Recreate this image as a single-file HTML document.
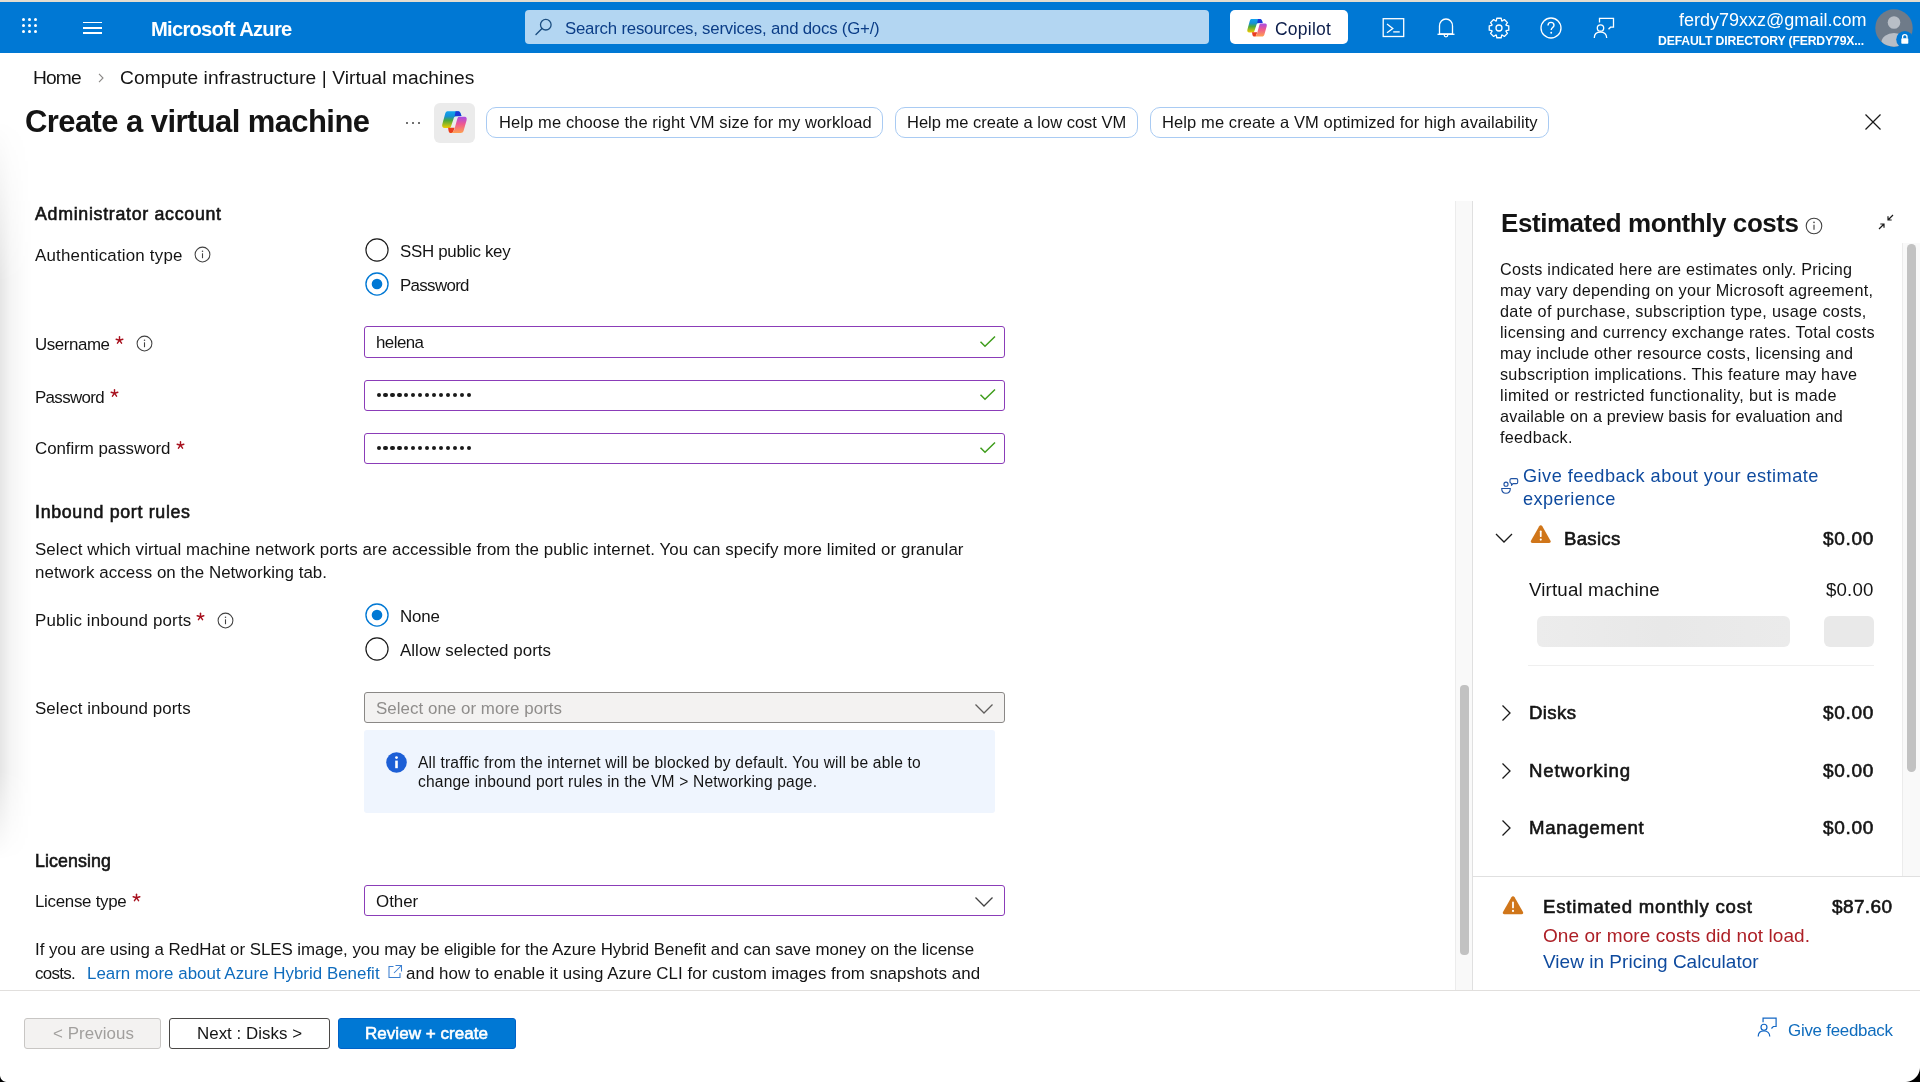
<!DOCTYPE html>
<html><head><meta charset="utf-8"><title>Create a virtual machine - Microsoft Azure</title>
<style>
html,body{margin:0;padding:0;background:#fff;width:1920px;height:1082px;overflow:hidden;position:relative;font-family:"Liberation Sans",sans-serif}
.t{position:absolute;white-space:pre;will-change:transform}
</style></head><body>
<div style="position:absolute;left:0px;top:0px;width:1920px;height:2px;background:#e4ddd0"></div>
<div style="position:absolute;left:0px;top:2px;width:1920px;height:51px;background:#0078d4"></div>
<div style="position:absolute;left:21.7px;top:17.5px;width:3px;height:3px;border-radius:50%;background:#fff"></div>
<div style="position:absolute;left:27.9px;top:17.5px;width:3px;height:3px;border-radius:50%;background:#fff"></div>
<div style="position:absolute;left:34.2px;top:17.5px;width:3px;height:3px;border-radius:50%;background:#fff"></div>
<div style="position:absolute;left:21.7px;top:23.75px;width:3px;height:3px;border-radius:50%;background:#fff"></div>
<div style="position:absolute;left:27.9px;top:23.75px;width:3px;height:3px;border-radius:50%;background:#fff"></div>
<div style="position:absolute;left:34.2px;top:23.75px;width:3px;height:3px;border-radius:50%;background:#fff"></div>
<div style="position:absolute;left:21.7px;top:30.0px;width:3px;height:3px;border-radius:50%;background:#fff"></div>
<div style="position:absolute;left:27.9px;top:30.0px;width:3px;height:3px;border-radius:50%;background:#fff"></div>
<div style="position:absolute;left:34.2px;top:30.0px;width:3px;height:3px;border-radius:50%;background:#fff"></div>
<div style="position:absolute;left:83px;top:21.55px;width:18.700000000000003px;height:1.5px;background:#fff"></div>
<div style="position:absolute;left:83px;top:27.0px;width:18.700000000000003px;height:1.5px;background:#fff"></div>
<div style="position:absolute;left:83px;top:32.15px;width:18.700000000000003px;height:1.5px;background:#fff"></div>
<div style="position:absolute;left:525px;top:10px;width:684px;height:34px;background:#b3d6f2;border-radius:4px"></div>
<svg style="position:absolute;left:530px;top:16px" width="24" height="24" viewBox="0 0 24 24"><circle cx="15.8" cy="8.7" r="5.3" fill="none" stroke="#1b4e80" stroke-width="1.3"/><line x1="12" y1="12.6" x2="6" y2="18.6" stroke="#1b4e80" stroke-width="1.4" stroke-linecap="round"/></svg>
<div style="position:absolute;left:1230px;top:10px;width:118px;height:34px;background:#fff;border-radius:5px"></div>
<svg style="position:absolute;left:1243.5px;top:14.7px" width="27" height="27" viewBox="0 0 1082 1082"><defs>
<linearGradient id="cg1a" x1="0" y1="0" x2="0" y2="1"><stop offset="0" stop-color="#12a4f0"/><stop offset="0.3" stop-color="#1590d8"/><stop offset="0.55" stop-color="#4aa83c"/><stop offset="1" stop-color="#f2cc00"/></linearGradient>
<linearGradient id="cg2a" x1="0" y1="0" x2="0" y2="1"><stop offset="0" stop-color="#a64ce6"/><stop offset="0.45" stop-color="#ee5990"/><stop offset="1" stop-color="#ffa050"/></linearGradient></defs>
<path d="M300 165 L640 165 C700 165 730 210 745 320 L560 330 C520 340 500 380 490 420 L410 660 C400 690 380 700 340 700 L210 700 C150 700 120 650 135 590 L230 240 C250 190 270 165 300 165 Z" fill="url(#cg1a)"/>
<path d="M560 165 L640 165 C690 165 720 210 745 320 L530 325 C545 260 550 200 560 165 Z" fill="#1c36d6"/>
<path d="M320 690 L530 690 L480 830 C470 855 450 862 420 862 C380 862 350 840 340 800 Z" fill="#ea3d1c"/>
<path d="M660 340 L850 340 C905 340 925 390 910 450 L815 790 C800 840 770 860 720 860 L420 860 C470 850 500 810 520 750 L610 420 C625 370 640 340 660 340 Z" fill="url(#cg2a)"/>
</svg>
<svg style="position:absolute;left:1382px;top:17px" width="23" height="21" viewBox="0 0 23 21"><rect x="1.2" y="1.7" width="20.5" height="17.8" fill="none" stroke="#fff" stroke-width="1.3"/><polyline points="5,7 10.8,11.4 5,15.8" fill="none" stroke="#fff" stroke-width="1.3"/><line x1="11.2" y1="14.9" x2="17.7" y2="14.9" stroke="#fff" stroke-width="1.3"/></svg>
<svg style="position:absolute;left:1436px;top:17px" width="20" height="22" viewBox="0 0 20 22"><path d="M3.5 17 V9 C3.5 5 6.3 2 10 2 C13.7 2 16.5 5 16.5 9 V17 Z" fill="none" stroke="#fff" stroke-width="1.3"/><line x1="1.5" y1="17.3" x2="18.5" y2="17.3" stroke="#fff" stroke-width="1.3"/><path d="M8.2 18 a1.8 1.8 0 0 0 3.6 0" fill="none" stroke="#fff" stroke-width="1.2"/></svg>
<svg style="position:absolute;left:1487.5px;top:16.5px" width="22" height="22" viewBox="0 0 22 22"><polygon points="20.76,8.82 20.76,13.18 18.11,13.68 17.92,14.14 19.44,16.36 16.36,19.44 14.14,17.92 13.68,18.11 13.18,20.76 8.82,20.76 8.32,18.11 7.86,17.92 5.64,19.44 2.56,16.36 4.08,14.14 3.89,13.68 1.24,13.18 1.24,8.82 3.89,8.32 4.08,7.86 2.56,5.64 5.64,2.56 7.86,4.08 8.32,3.89 8.82,1.24 13.18,1.24 13.68,3.89 14.14,4.08 16.36,2.56 19.44,5.64 17.92,7.86 18.11,8.32" fill="none" stroke="#fff" stroke-width="1.3" stroke-linejoin="round"/><circle cx="11" cy="11" r="3" fill="none" stroke="#fff" stroke-width="1.3"/></svg>
<svg style="position:absolute;left:1540px;top:17px" width="22" height="22" viewBox="0 0 22 22"><circle cx="11" cy="11" r="10" fill="none" stroke="#fff" stroke-width="1.3"/><path d="M8 8.5 C8 6.5 9.4 5.4 11 5.4 C12.7 5.4 14 6.6 14 8.2 C14 10.4 11.2 10.6 11.2 13" fill="none" stroke="#fff" stroke-width="1.4"/><circle cx="11.2" cy="15.8" r="0.95" fill="#fff"/></svg>
<svg style="position:absolute;left:1593px;top:17px" width="22" height="22" viewBox="0 0 22 22"><path d="M6.5 5.5 V1.3 H20.5 V10.2 H17.5 L15.5 12.3" fill="none" stroke="#fff" stroke-width="1.3"/><circle cx="7.5" cy="11" r="3.2" fill="none" stroke="#fff" stroke-width="1.3"/><path d="M1.3 21 C1.3 17 4 15 7.5 15 C11 15 13.7 17 13.7 21" fill="none" stroke="#fff" stroke-width="1.3"/></svg>
<svg style="position:absolute;left:1874.5px;top:8.5px" width="46" height="40" viewBox="0 0 46 40"><defs><clipPath id="av"><circle cx="19" cy="19" r="18.7"/></clipPath></defs><circle cx="19" cy="19" r="18.7" fill="#6f7b89"/><g clip-path="url(#av)"><circle cx="19" cy="13.5" r="6.3" fill="#b8bec6"/><ellipse cx="19" cy="33" rx="12.5" ry="9" fill="#b8bec6"/></g><circle cx="29.8" cy="30.5" r="8.6" fill="#0078d4"/><rect x="26.3" y="29.2" width="7" height="5.6" rx="0.8" fill="#fff"/><path d="M27.6 29.5 V27.8 a2.2 2.2 0 0 1 4.4 0 V29.5" fill="none" stroke="#fff" stroke-width="1.3"/></svg>
<div style="position:absolute;left:0;top:120px;width:32px;height:740px;background:linear-gradient(to right,rgba(0,0,0,0.1),rgba(0,0,0,0.04) 35%,rgba(0,0,0,0.01) 75%,rgba(0,0,0,0) 100%);-webkit-mask-image:linear-gradient(to bottom,transparent 0,#000 22%,#000 88%,transparent 100%)"></div>
<svg style="position:absolute;left:96px;top:72px" width="10" height="12" viewBox="0 0 10 12"><polyline points="3,1.8 7,6 3,10.2" fill="none" stroke="#8a8886" stroke-width="1.1"/></svg>
<div style="position:absolute;left:405.5px;top:121.5px;width:2px;height:2px;border-radius:50%;background:#424242"></div>
<div style="position:absolute;left:411.5px;top:121.5px;width:2px;height:2px;border-radius:50%;background:#424242"></div>
<div style="position:absolute;left:417.5px;top:121.5px;width:2px;height:2px;border-radius:50%;background:#424242"></div>
<div style="position:absolute;left:434px;top:103px;width:41px;height:40px;background:#ebebeb;border-radius:6px"></div>
<svg style="position:absolute;left:438px;top:106px" width="34" height="34" viewBox="0 0 1082 1082"><defs>
<linearGradient id="cg1b" x1="0" y1="0" x2="0" y2="1"><stop offset="0" stop-color="#12a4f0"/><stop offset="0.3" stop-color="#1590d8"/><stop offset="0.55" stop-color="#4aa83c"/><stop offset="1" stop-color="#f2cc00"/></linearGradient>
<linearGradient id="cg2b" x1="0" y1="0" x2="0" y2="1"><stop offset="0" stop-color="#a64ce6"/><stop offset="0.45" stop-color="#ee5990"/><stop offset="1" stop-color="#ffa050"/></linearGradient></defs>
<path d="M300 165 L640 165 C700 165 730 210 745 320 L560 330 C520 340 500 380 490 420 L410 660 C400 690 380 700 340 700 L210 700 C150 700 120 650 135 590 L230 240 C250 190 270 165 300 165 Z" fill="url(#cg1b)"/>
<path d="M560 165 L640 165 C690 165 720 210 745 320 L530 325 C545 260 550 200 560 165 Z" fill="#1c36d6"/>
<path d="M320 690 L530 690 L480 830 C470 855 450 862 420 862 C380 862 350 840 340 800 Z" fill="#ea3d1c"/>
<path d="M660 340 L850 340 C905 340 925 390 910 450 L815 790 C800 840 770 860 720 860 L420 860 C470 850 500 810 520 750 L610 420 C625 370 640 340 660 340 Z" fill="url(#cg2b)"/>
</svg>
<div style="position:absolute;left:486.3px;top:107.3px;width:396.7px;height:30.500000000000014px;box-sizing:border-box;border:1.3px solid #a9cbf3;border-radius:10px;background:#fff"></div>
<div style="position:absolute;left:894.5px;top:107.3px;width:243.9000000000001px;height:30.500000000000014px;box-sizing:border-box;border:1.3px solid #a9cbf3;border-radius:10px;background:#fff"></div>
<div style="position:absolute;left:1150px;top:107.3px;width:399px;height:30.500000000000014px;box-sizing:border-box;border:1.3px solid #a9cbf3;border-radius:10px;background:#fff"></div>
<svg style="position:absolute;left:1863px;top:112px" width="20" height="20" viewBox="0 0 20 20"><line x1="2.5" y1="2.5" x2="17.5" y2="17.5" stroke="#1a1a1a" stroke-width="1.3"/><line x1="17.5" y1="2.5" x2="2.5" y2="17.5" stroke="#1a1a1a" stroke-width="1.3"/></svg>
<svg style="position:absolute;left:194.1px;top:246.4px" width="17" height="17" viewBox="0 0 17 17"><circle cx="8.5" cy="8.5" r="7.4" fill="none" stroke="#424242" stroke-width="1.05"/><line x1="8.5" y1="7.3" x2="8.5" y2="12.2" stroke="#424242" stroke-width="1.1"/><circle cx="8.5" cy="5.2" r="0.75" fill="#424242"/></svg>
<svg style="position:absolute;left:363.7px;top:237px" width="26" height="26" viewBox="0 0 26 26"><circle cx="13" cy="13" r="11.05" fill="none" stroke="#1a1a1a" stroke-width="1.2"/></svg>
<svg style="position:absolute;left:363.7px;top:271.3px" width="26" height="26" viewBox="0 0 26 26"><circle cx="13" cy="13" r="11.05" fill="none" stroke="#0078d4" stroke-width="1.35"/><circle cx="13" cy="13" r="5.3" fill="#0078d4"/></svg>
<svg style="position:absolute;left:0;top:0;overflow:visible" width="1" height="1"><line x1="119.50" y1="340.30" x2="119.50" y2="336.80" stroke="#a8121f" stroke-width="1.45" stroke-linecap="round"/><line x1="119.50" y1="340.30" x2="122.83" y2="339.22" stroke="#a8121f" stroke-width="1.45" stroke-linecap="round"/><line x1="119.50" y1="340.30" x2="121.56" y2="343.13" stroke="#a8121f" stroke-width="1.45" stroke-linecap="round"/><line x1="119.50" y1="340.30" x2="117.44" y2="343.13" stroke="#a8121f" stroke-width="1.45" stroke-linecap="round"/><line x1="119.50" y1="340.30" x2="116.17" y2="339.22" stroke="#a8121f" stroke-width="1.45" stroke-linecap="round"/></svg>
<svg style="position:absolute;left:136.2px;top:334.6px" width="17" height="17" viewBox="0 0 17 17"><circle cx="8.5" cy="8.5" r="7.4" fill="none" stroke="#424242" stroke-width="1.05"/><line x1="8.5" y1="7.3" x2="8.5" y2="12.2" stroke="#424242" stroke-width="1.1"/><circle cx="8.5" cy="5.2" r="0.75" fill="#424242"/></svg>
<svg style="position:absolute;left:0;top:0;overflow:visible" width="1" height="1"><line x1="114.50" y1="393.30" x2="114.50" y2="389.80" stroke="#a8121f" stroke-width="1.45" stroke-linecap="round"/><line x1="114.50" y1="393.30" x2="117.83" y2="392.22" stroke="#a8121f" stroke-width="1.45" stroke-linecap="round"/><line x1="114.50" y1="393.30" x2="116.56" y2="396.13" stroke="#a8121f" stroke-width="1.45" stroke-linecap="round"/><line x1="114.50" y1="393.30" x2="112.44" y2="396.13" stroke="#a8121f" stroke-width="1.45" stroke-linecap="round"/><line x1="114.50" y1="393.30" x2="111.17" y2="392.22" stroke="#a8121f" stroke-width="1.45" stroke-linecap="round"/></svg>
<svg style="position:absolute;left:0;top:0;overflow:visible" width="1" height="1"><line x1="180.50" y1="445.30" x2="180.50" y2="441.80" stroke="#a8121f" stroke-width="1.45" stroke-linecap="round"/><line x1="180.50" y1="445.30" x2="183.83" y2="444.22" stroke="#a8121f" stroke-width="1.45" stroke-linecap="round"/><line x1="180.50" y1="445.30" x2="182.56" y2="448.13" stroke="#a8121f" stroke-width="1.45" stroke-linecap="round"/><line x1="180.50" y1="445.30" x2="178.44" y2="448.13" stroke="#a8121f" stroke-width="1.45" stroke-linecap="round"/><line x1="180.50" y1="445.30" x2="177.17" y2="444.22" stroke="#a8121f" stroke-width="1.45" stroke-linecap="round"/></svg>
<div style="position:absolute;left:363.5px;top:326.3px;width:641.0px;height:31.5px;box-sizing:border-box;border:1.3px solid #8b3db8;border-radius:3px;background:#fff"></div>
<svg style="position:absolute;left:979px;top:334.55px" width="18" height="14" viewBox="0 0 18 14"><polyline points="1.5,6.8 6,11.3 16,1.5" fill="none" stroke="#3f9d1c" stroke-width="1.5"/></svg>
<div style="position:absolute;left:363.5px;top:379.8px;width:641.0px;height:31.0px;box-sizing:border-box;border:1.3px solid #8b3db8;border-radius:3px;background:#fff"></div>
<svg style="position:absolute;left:979px;top:387.8px" width="18" height="14" viewBox="0 0 18 14"><polyline points="1.5,6.8 6,11.3 16,1.5" fill="none" stroke="#3f9d1c" stroke-width="1.5"/></svg>
<div style="position:absolute;left:363.5px;top:432.6px;width:641.0px;height:31.0px;box-sizing:border-box;border:1.3px solid #8b3db8;border-radius:3px;background:#fff"></div>
<svg style="position:absolute;left:979px;top:440.6px" width="18" height="14" viewBox="0 0 18 14"><polyline points="1.5,6.8 6,11.3 16,1.5" fill="none" stroke="#3f9d1c" stroke-width="1.5"/></svg>
<div style="position:absolute;left:376.50px;top:393.30px;width:4.2px;height:4.2px;border-radius:50%;background:#1a1a1a"></div>
<div style="position:absolute;left:383.45px;top:393.30px;width:4.2px;height:4.2px;border-radius:50%;background:#1a1a1a"></div>
<div style="position:absolute;left:390.40px;top:393.30px;width:4.2px;height:4.2px;border-radius:50%;background:#1a1a1a"></div>
<div style="position:absolute;left:397.35px;top:393.30px;width:4.2px;height:4.2px;border-radius:50%;background:#1a1a1a"></div>
<div style="position:absolute;left:404.30px;top:393.30px;width:4.2px;height:4.2px;border-radius:50%;background:#1a1a1a"></div>
<div style="position:absolute;left:411.25px;top:393.30px;width:4.2px;height:4.2px;border-radius:50%;background:#1a1a1a"></div>
<div style="position:absolute;left:418.20px;top:393.30px;width:4.2px;height:4.2px;border-radius:50%;background:#1a1a1a"></div>
<div style="position:absolute;left:425.15px;top:393.30px;width:4.2px;height:4.2px;border-radius:50%;background:#1a1a1a"></div>
<div style="position:absolute;left:432.10px;top:393.30px;width:4.2px;height:4.2px;border-radius:50%;background:#1a1a1a"></div>
<div style="position:absolute;left:439.05px;top:393.30px;width:4.2px;height:4.2px;border-radius:50%;background:#1a1a1a"></div>
<div style="position:absolute;left:446.00px;top:393.30px;width:4.2px;height:4.2px;border-radius:50%;background:#1a1a1a"></div>
<div style="position:absolute;left:452.95px;top:393.30px;width:4.2px;height:4.2px;border-radius:50%;background:#1a1a1a"></div>
<div style="position:absolute;left:459.90px;top:393.30px;width:4.2px;height:4.2px;border-radius:50%;background:#1a1a1a"></div>
<div style="position:absolute;left:466.85px;top:393.30px;width:4.2px;height:4.2px;border-radius:50%;background:#1a1a1a"></div>
<div style="position:absolute;left:376.50px;top:445.90px;width:4.2px;height:4.2px;border-radius:50%;background:#1a1a1a"></div>
<div style="position:absolute;left:383.45px;top:445.90px;width:4.2px;height:4.2px;border-radius:50%;background:#1a1a1a"></div>
<div style="position:absolute;left:390.40px;top:445.90px;width:4.2px;height:4.2px;border-radius:50%;background:#1a1a1a"></div>
<div style="position:absolute;left:397.35px;top:445.90px;width:4.2px;height:4.2px;border-radius:50%;background:#1a1a1a"></div>
<div style="position:absolute;left:404.30px;top:445.90px;width:4.2px;height:4.2px;border-radius:50%;background:#1a1a1a"></div>
<div style="position:absolute;left:411.25px;top:445.90px;width:4.2px;height:4.2px;border-radius:50%;background:#1a1a1a"></div>
<div style="position:absolute;left:418.20px;top:445.90px;width:4.2px;height:4.2px;border-radius:50%;background:#1a1a1a"></div>
<div style="position:absolute;left:425.15px;top:445.90px;width:4.2px;height:4.2px;border-radius:50%;background:#1a1a1a"></div>
<div style="position:absolute;left:432.10px;top:445.90px;width:4.2px;height:4.2px;border-radius:50%;background:#1a1a1a"></div>
<div style="position:absolute;left:439.05px;top:445.90px;width:4.2px;height:4.2px;border-radius:50%;background:#1a1a1a"></div>
<div style="position:absolute;left:446.00px;top:445.90px;width:4.2px;height:4.2px;border-radius:50%;background:#1a1a1a"></div>
<div style="position:absolute;left:452.95px;top:445.90px;width:4.2px;height:4.2px;border-radius:50%;background:#1a1a1a"></div>
<div style="position:absolute;left:459.90px;top:445.90px;width:4.2px;height:4.2px;border-radius:50%;background:#1a1a1a"></div>
<div style="position:absolute;left:466.85px;top:445.90px;width:4.2px;height:4.2px;border-radius:50%;background:#1a1a1a"></div>
<svg style="position:absolute;left:0;top:0;overflow:visible" width="1" height="1"><line x1="200.50" y1="616.80" x2="200.50" y2="613.30" stroke="#a8121f" stroke-width="1.45" stroke-linecap="round"/><line x1="200.50" y1="616.80" x2="203.83" y2="615.72" stroke="#a8121f" stroke-width="1.45" stroke-linecap="round"/><line x1="200.50" y1="616.80" x2="202.56" y2="619.63" stroke="#a8121f" stroke-width="1.45" stroke-linecap="round"/><line x1="200.50" y1="616.80" x2="198.44" y2="619.63" stroke="#a8121f" stroke-width="1.45" stroke-linecap="round"/><line x1="200.50" y1="616.80" x2="197.17" y2="615.72" stroke="#a8121f" stroke-width="1.45" stroke-linecap="round"/></svg>
<svg style="position:absolute;left:217.1px;top:611.5px" width="17" height="17" viewBox="0 0 17 17"><circle cx="8.5" cy="8.5" r="7.4" fill="none" stroke="#424242" stroke-width="1.05"/><line x1="8.5" y1="7.3" x2="8.5" y2="12.2" stroke="#424242" stroke-width="1.1"/><circle cx="8.5" cy="5.2" r="0.75" fill="#424242"/></svg>
<svg style="position:absolute;left:363.6px;top:601.5px" width="26" height="26" viewBox="0 0 26 26"><circle cx="13" cy="13" r="11.05" fill="none" stroke="#0078d4" stroke-width="1.35"/><circle cx="13" cy="13" r="5.3" fill="#0078d4"/></svg>
<svg style="position:absolute;left:363.6px;top:635.9px" width="26" height="26" viewBox="0 0 26 26"><circle cx="13" cy="13" r="11.05" fill="none" stroke="#1a1a1a" stroke-width="1.2"/></svg>
<div style="position:absolute;left:363.5px;top:691.5px;width:641.0px;height:31.0px;box-sizing:border-box;border:1.2px solid #8a8886;border-radius:3px;background:#f3f2f1"></div>
<svg style="position:absolute;left:974px;top:703px" width="20" height="12" viewBox="0 0 20 12"><polyline points="1.5,1.5 10,10 18.5,1.5" fill="none" stroke="#605e5c" stroke-width="1.3"/></svg>
<div style="position:absolute;left:364px;top:730px;width:631px;height:83px;background:#eff5fe;border-radius:3px"></div>
<svg style="position:absolute;left:385.5px;top:751.5px" width="21" height="21" viewBox="0 0 21 21"><circle cx="10.5" cy="10.5" r="10.3" fill="#1d5fd6"/><rect x="9.2" y="8.6" width="2.6" height="7.6" fill="#fff"/><circle cx="10.5" cy="5.6" r="1.45" fill="#fff"/></svg>
<svg style="position:absolute;left:0;top:0;overflow:visible" width="1" height="1"><line x1="136.50" y1="897.80" x2="136.50" y2="894.30" stroke="#a8121f" stroke-width="1.45" stroke-linecap="round"/><line x1="136.50" y1="897.80" x2="139.83" y2="896.72" stroke="#a8121f" stroke-width="1.45" stroke-linecap="round"/><line x1="136.50" y1="897.80" x2="138.56" y2="900.63" stroke="#a8121f" stroke-width="1.45" stroke-linecap="round"/><line x1="136.50" y1="897.80" x2="134.44" y2="900.63" stroke="#a8121f" stroke-width="1.45" stroke-linecap="round"/><line x1="136.50" y1="897.80" x2="133.17" y2="896.72" stroke="#a8121f" stroke-width="1.45" stroke-linecap="round"/></svg>
<div style="position:absolute;left:363.5px;top:884.8px;width:641.0px;height:30.800000000000068px;box-sizing:border-box;border:1.3px solid #8b3db8;border-radius:3px;background:#fff"></div>
<svg style="position:absolute;left:974px;top:896px" width="20" height="12" viewBox="0 0 20 12"><polyline points="1.5,1.5 10,10 18.5,1.5" fill="none" stroke="#424242" stroke-width="1.3"/></svg>
<svg style="position:absolute;left:386.5px;top:964px" width="16" height="16" viewBox="0 0 16 16"><path d="M6.5 2.5 H2 V13.5 H13 V9" fill="none" stroke="#3b7fd0" stroke-width="1.05"/><path d="M8.5 1.5 H14.5 V7.5 M14.5 1.5 L7 9" fill="none" stroke="#3b7fd0" stroke-width="1.05"/></svg>
<div style="position:absolute;left:0px;top:990px;width:1920px;height:92px;background:#fff"></div>
<div style="position:absolute;left:0px;top:989.5px;width:1920px;height:1.5px;background:#e1dfdd"></div>
<div style="position:absolute;left:24px;top:1018px;width:137.3px;height:30.59999999999991px;box-sizing:border-box;border:1.2px solid #c8c6c4;border-radius:3px;background:#f3f2f1"></div>
<div style="position:absolute;left:168.6px;top:1018px;width:161.9px;height:30.59999999999991px;box-sizing:border-box;border:1.2px solid #4a4846;border-radius:3px;background:#fff"></div>
<div style="position:absolute;left:337.9px;top:1017.8px;width:178.20000000000005px;height:30.799999999999955px;box-sizing:border-box;border:1px solid #0062c8;border-radius:3px;background:#0078d4"></div>
<svg style="position:absolute;left:1756.5px;top:1016.5px" width="20.5" height="20.5" viewBox="0 0 22 22"><path d="M6.5 5.5 V1.3 H20.5 V10.2 H17.5 L15.5 12.3" fill="none" stroke="#1266c4" stroke-width="1.3"/><circle cx="7.5" cy="11" r="3.2" fill="none" stroke="#1266c4" stroke-width="1.3"/><path d="M1.3 21 C1.3 17 4 15 7.5 15 C11 15 13.7 17 13.7 21" fill="none" stroke="#1266c4" stroke-width="1.3"/></svg>
<div style="position:absolute;left:1455px;top:201px;width:17.5px;height:789px;background:#f9f9f9;border-left:1px solid #ececec;box-sizing:border-box"></div>
<div style="position:absolute;left:1472px;top:201px;width:1.2000000000000455px;height:789px;background:#e0e0e0"></div>
<div style="position:absolute;left:1460px;top:684.5px;width:8.5px;height:270.5px;background:#c2c2c2;border-radius:4px"></div>
<svg style="position:absolute;left:1805px;top:216.5px" width="18" height="18" viewBox="0 0 18 18"><circle cx="9" cy="9" r="7.8" fill="none" stroke="#424242" stroke-width="1.1"/><line x1="9" y1="7.7" x2="9" y2="12.8" stroke="#424242" stroke-width="1.15"/><circle cx="9" cy="5.4" r="0.8" fill="#424242"/></svg>
<svg style="position:absolute;left:1876px;top:212px" width="20" height="20" viewBox="0 0 20 20"><path d="M17 3 L12 8 M12 4.3 V8 H15.7" fill="none" stroke="#1a1a1a" stroke-width="1.2"/><path d="M3 17 L8 12 M4.3 12 H8 V15.7" fill="none" stroke="#1a1a1a" stroke-width="1.2"/></svg>
<div style="position:absolute;left:1902px;top:243px;width:18px;height:633px;background:#f9f9f9;border-left:1px solid #ececec;box-sizing:border-box"></div>
<div style="position:absolute;left:1907px;top:244px;width:9px;height:527.5px;background:#c2c2c2;border-radius:4.5px"></div>
<svg style="position:absolute;left:1500px;top:476px" width="20" height="20" viewBox="0 0 20 20"><circle cx="6" cy="8.2" r="2.05" fill="none" stroke="#1f52a3" stroke-width="1.1"/><path d="M1.7 12.5 H10.3 C10.3 15.4 8.4 17.2 6 17.2 C3.6 17.2 1.7 15.4 1.7 12.5 Z" fill="none" stroke="#1f52a3" stroke-width="1.1"/><path d="M11.4 2.6 H16.3 C17.1 2.6 17.7 3.2 17.7 4 V6.2 C17.7 7 17.1 7.6 16.3 7.6 H13 L11.5 9.4 V7.5 C10.6 7.3 10 6.8 10 6 V4 C10 3.2 10.6 2.6 11.4 2.6 Z" fill="none" stroke="#1f52a3" stroke-width="1.1" stroke-linejoin="round"/></svg>
<svg style="position:absolute;left:1494px;top:531px" width="20" height="14" viewBox="0 0 20 14"><polyline points="2,3 10,11 18,3" fill="none" stroke="#1a1a1a" stroke-width="1.3"/></svg>
<svg style="position:absolute;left:1529.5px;top:524.3px" width="21.5" height="19.6" viewBox="0 0 22 20"><path d="M11 1.3 C11.7 1.3 12.2 1.7 12.6 2.3 L21 17 C21.6 18.1 21 19.3 19.6 19.3 H2.4 C1 19.3 0.4 18.1 1 17 L9.4 2.3 C9.8 1.7 10.3 1.3 11 1.3Z" fill="#d0761a"/><rect x="10.1" y="6.5" width="1.8" height="6.8" rx="0.9" fill="#fff"/><circle cx="11" cy="15.9" r="1.1" fill="#fff"/></svg>
<div style="position:absolute;left:1537px;top:616.3px;width:253px;height:30.40000000000009px;background:linear-gradient(to right,#ececec,#e8e8e8 50%,#ebebeb);border-radius:6px"></div>
<div style="position:absolute;left:1824.4px;top:616.3px;width:50.0px;height:30.40000000000009px;background:#e9e9e9;border-radius:6px"></div>
<div style="position:absolute;left:1528px;top:664.5px;width:346px;height:1.5px;background:#efefef"></div>
<svg style="position:absolute;left:1498.5px;top:702.75px" width="14" height="20" viewBox="0 0 14 20"><polyline points="3.5,2.5 11,10 3.5,17.5" fill="none" stroke="#1a1a1a" stroke-width="1.3"/></svg>
<svg style="position:absolute;left:1498.5px;top:761px" width="14" height="20" viewBox="0 0 14 20"><polyline points="3.5,2.5 11,10 3.5,17.5" fill="none" stroke="#1a1a1a" stroke-width="1.3"/></svg>
<svg style="position:absolute;left:1498.5px;top:818.2px" width="14" height="20" viewBox="0 0 14 20"><polyline points="3.5,2.5 11,10 3.5,17.5" fill="none" stroke="#1a1a1a" stroke-width="1.3"/></svg>
<div style="position:absolute;left:1472px;top:875.5px;width:448px;height:1.2999999999999545px;background:#e0e0e0"></div>
<svg style="position:absolute;left:1502px;top:895px" width="22" height="20" viewBox="0 0 22 20"><path d="M11 1.3 C11.7 1.3 12.2 1.7 12.6 2.3 L21 17 C21.6 18.1 21 19.3 19.6 19.3 H2.4 C1 19.3 0.4 18.1 1 17 L9.4 2.3 C9.8 1.7 10.3 1.3 11 1.3Z" fill="#d0761a"/><rect x="10.1" y="6.5" width="1.8" height="6.8" rx="0.9" fill="#fff"/><circle cx="11" cy="15.9" r="1.1" fill="#fff"/></svg>
<div style="position:absolute;left:0;top:1075px;width:7px;height:7px;background:radial-gradient(circle at 7px 0px,transparent 6.5px,#000 7.5px)"></div>
<div style="position:absolute;left:1905px;top:1067px;width:15px;height:15px;background:radial-gradient(circle at 0px 0px,transparent 14.5px,#000 15.5px)"></div>
<div class="t" style="left:151.00px;top:19.00px;font-size:20.2px;line-height:20.2px;font-weight:bold;color:#fff;letter-spacing:-0.753px;">Microsoft Azure</div>
<div class="t" style="left:565.30px;top:21.00px;font-size:16.8px;line-height:16.8px;font-weight:normal;color:#0b3d87;letter-spacing:-0.207px;">Search resources, services, and docs (G+/)</div>
<div class="t" style="left:1274.60px;top:21.00px;font-size:17.5px;line-height:17.5px;font-weight:normal;color:#0b1d4a;letter-spacing:0.221px;">Copilot</div>
<div class="t" style="left:1679.40px;top:11.00px;font-size:18px;line-height:18px;font-weight:normal;color:#fff;letter-spacing:0.004px;">ferdy79xxz@gmail.com</div>
<div class="t" style="left:1657.60px;top:35.00px;font-size:12.2px;line-height:12.2px;font-weight:bold;color:#fff;letter-spacing:-0.137px;">DEFAULT DIRECTORY (FERDY79X...</div>
<div class="t" style="left:32.70px;top:68.00px;font-size:19.2px;line-height:19.2px;font-weight:normal;color:#141414;letter-spacing:-0.827px;">Home</div>
<div class="t" style="left:119.80px;top:68.00px;font-size:19.2px;line-height:19.2px;font-weight:normal;color:#141414;letter-spacing:0.053px;">Compute infrastructure | Virtual machines</div>
<div class="t" style="left:25.00px;top:106.00px;font-size:31px;line-height:31px;font-weight:bold;color:#141414;letter-spacing:-0.582px;">Create a virtual machine</div>
<div class="t" style="left:498.75px;top:114.00px;font-size:16.5px;line-height:16.5px;font-weight:normal;color:#141414;letter-spacing:0.107px;">Help me choose the right VM size for my workload</div>
<div class="t" style="left:907.00px;top:114.00px;font-size:16.5px;line-height:16.5px;font-weight:normal;color:#141414;letter-spacing:0.005px;">Help me create a low cost VM</div>
<div class="t" style="left:1162.00px;top:114.00px;font-size:16.5px;line-height:16.5px;font-weight:normal;color:#141414;letter-spacing:0.102px;">Help me create a VM optimized for high availability</div>
<div class="t" style="left:34.90px;top:206.00px;font-size:17.8px;line-height:17.8px;font-weight:normal;color:#141414;letter-spacing:0.702px;;-webkit-text-stroke:0.6px #141414">Administrator account</div>
<div class="t" style="left:34.90px;top:248.00px;font-size:16.9px;line-height:16.9px;font-weight:normal;color:#141414;letter-spacing:0.207px;">Authentication type</div>
<div class="t" style="left:399.70px;top:244.00px;font-size:16.9px;line-height:16.9px;font-weight:normal;color:#141414;letter-spacing:-0.302px;">SSH public key</div>
<div class="t" style="left:399.70px;top:278.00px;font-size:16.9px;line-height:16.9px;font-weight:normal;color:#141414;letter-spacing:-0.666px;">Password</div>
<div class="t" style="left:35.10px;top:337.00px;font-size:16.9px;line-height:16.9px;font-weight:normal;color:#141414;letter-spacing:-0.416px;">Username</div>
<div class="t" style="left:35.10px;top:390.00px;font-size:16.9px;line-height:16.9px;font-weight:normal;color:#141414;letter-spacing:-0.651px;">Password</div>
<div class="t" style="left:35.10px;top:441.00px;font-size:16.9px;line-height:16.9px;font-weight:normal;color:#141414;letter-spacing:-0.040px;">Confirm password</div>
<div class="t" style="left:376.20px;top:335.00px;font-size:16.9px;line-height:16.9px;font-weight:normal;color:#141414;letter-spacing:-0.544px;">helena</div>
<div class="t" style="left:35.00px;top:504.00px;font-size:17.8px;line-height:17.8px;font-weight:normal;color:#141414;letter-spacing:0.686px;;-webkit-text-stroke:0.6px #141414">Inbound port rules</div>
<div class="t" style="left:35.00px;top:542.00px;font-size:16.9px;line-height:16.9px;font-weight:normal;color:#141414;letter-spacing:0.084px;">Select which virtual machine network ports are accessible from the public internet. You can specify more limited or granular</div>
<div class="t" style="left:35.00px;top:565.00px;font-size:16.9px;line-height:16.9px;font-weight:normal;color:#141414;letter-spacing:0.053px;">network access on the Networking tab.</div>
<div class="t" style="left:35.00px;top:613.00px;font-size:16.9px;line-height:16.9px;font-weight:normal;color:#141414;letter-spacing:0.166px;">Public inbound ports</div>
<div class="t" style="left:399.80px;top:609.00px;font-size:16.9px;line-height:16.9px;font-weight:normal;color:#141414;letter-spacing:-0.126px;">None</div>
<div class="t" style="left:399.80px;top:643.00px;font-size:16.9px;line-height:16.9px;font-weight:normal;color:#141414;letter-spacing:0.042px;">Allow selected ports</div>
<div class="t" style="left:35.00px;top:701.00px;font-size:16.9px;line-height:16.9px;font-weight:normal;color:#141414;letter-spacing:0.084px;">Select inbound ports</div>
<div class="t" style="left:375.80px;top:701.00px;font-size:16.9px;line-height:16.9px;font-weight:normal;color:#8f8d8b;letter-spacing:0.046px;">Select one or more ports</div>
<div class="t" style="left:418.00px;top:755.00px;font-size:15.6px;line-height:15.6px;font-weight:normal;color:#141414;letter-spacing:0.186px;">All traffic from the internet will be blocked by default. You will be able to</div>
<div class="t" style="left:418.00px;top:774.00px;font-size:15.6px;line-height:15.6px;font-weight:normal;color:#141414;letter-spacing:0.176px;">change inbound port rules in the VM &gt; Networking page.</div>
<div class="t" style="left:35.00px;top:853.00px;font-size:17.8px;line-height:17.8px;font-weight:normal;color:#141414;letter-spacing:0.084px;;-webkit-text-stroke:0.6px #141414">Licensing</div>
<div class="t" style="left:35.00px;top:894.00px;font-size:16.9px;line-height:16.9px;font-weight:normal;color:#141414;letter-spacing:-0.285px;">License type</div>
<div class="t" style="left:375.90px;top:894.00px;font-size:16.9px;line-height:16.9px;font-weight:normal;color:#141414;letter-spacing:-0.011px;">Other</div>
<div class="t" style="left:35.00px;top:942.00px;font-size:16.9px;line-height:16.9px;font-weight:normal;color:#141414;letter-spacing:-0.044px;">If you are using a RedHat or SLES image, you may be eligible for the Azure Hybrid Benefit and can save money on the license</div>
<div class="t" style="left:35.00px;top:966.00px;font-size:16.9px;line-height:16.9px;font-weight:normal;color:#141414;letter-spacing:-0.703px;">costs.</div>
<div class="t" style="left:86.50px;top:966.00px;font-size:16.9px;line-height:16.9px;font-weight:normal;color:#0f6cbd;letter-spacing:0.016px;">Learn more about Azure Hybrid Benefit</div>
<div class="t" style="left:406.00px;top:966.00px;font-size:16.9px;line-height:16.9px;font-weight:normal;color:#141414;letter-spacing:0.045px;">and how to enable it using Azure CLI for custom images from snapshots and</div>
<div class="t" style="left:53.00px;top:1026.00px;font-size:16.9px;line-height:16.9px;font-weight:normal;color:#a19f9d;letter-spacing:0.081px;">&lt; Previous</div>
<div class="t" style="left:196.50px;top:1026.00px;font-size:16.9px;line-height:16.9px;font-weight:normal;color:#141414;letter-spacing:0.027px;">Next : Disks &gt;</div>
<div class="t" style="left:365.20px;top:1025.00px;font-size:17px;line-height:17px;font-weight:normal;color:#fff;letter-spacing:0.046px;;-webkit-text-stroke:0.6px #fff">Review + create</div>
<div class="t" style="left:1788.30px;top:1023.00px;font-size:16.9px;line-height:16.9px;font-weight:normal;color:#0f6cbd;letter-spacing:-0.248px;">Give feedback</div>
<div class="t" style="left:1501.00px;top:210.00px;font-size:26px;line-height:26px;font-weight:bold;color:#141414;letter-spacing:-0.442px;">Estimated monthly costs</div>
<div class="t" style="left:1500.40px;top:261.00px;font-size:16.2px;line-height:16.2px;font-weight:normal;color:#141414;letter-spacing:0.243px;">Costs indicated here are estimates only. Pricing</div>
<div class="t" style="left:1500.40px;top:282.00px;font-size:16.2px;line-height:16.2px;font-weight:normal;color:#141414;letter-spacing:0.263px;">may vary depending on your Microsoft agreement,</div>
<div class="t" style="left:1500.40px;top:303.00px;font-size:16.2px;line-height:16.2px;font-weight:normal;color:#141414;letter-spacing:0.320px;">date of purchase, subscription type, usage costs,</div>
<div class="t" style="left:1500.40px;top:324.00px;font-size:16.2px;line-height:16.2px;font-weight:normal;color:#141414;letter-spacing:0.271px;">licensing and currency exchange rates. Total costs</div>
<div class="t" style="left:1500.40px;top:345.00px;font-size:16.2px;line-height:16.2px;font-weight:normal;color:#141414;letter-spacing:0.263px;">may include other resource costs, licensing and</div>
<div class="t" style="left:1500.40px;top:366.00px;font-size:16.2px;line-height:16.2px;font-weight:normal;color:#141414;letter-spacing:0.271px;">subscription implications. This feature may have</div>
<div class="t" style="left:1500.40px;top:387.00px;font-size:16.2px;line-height:16.2px;font-weight:normal;color:#141414;letter-spacing:0.390px;">limited or restricted functionality, but is made</div>
<div class="t" style="left:1500.40px;top:408.00px;font-size:16.2px;line-height:16.2px;font-weight:normal;color:#141414;letter-spacing:0.153px;">available on a preview basis for evaluation and</div>
<div class="t" style="left:1500.40px;top:429.00px;font-size:16.2px;line-height:16.2px;font-weight:normal;color:#141414;letter-spacing:0.288px;">feedback.</div>
<div class="t" style="left:1523.30px;top:467.00px;font-size:18.2px;line-height:18.2px;font-weight:normal;color:#0e4a9e;letter-spacing:0.448px;">Give feedback about your estimate</div>
<div class="t" style="left:1523.30px;top:490.00px;font-size:18.2px;line-height:18.2px;font-weight:normal;color:#0e4a9e;letter-spacing:0.369px;">experience</div>
<div class="t" style="left:1564.00px;top:530.00px;font-size:18.6px;line-height:18.6px;font-weight:normal;color:#141414;letter-spacing:0.287px;;-webkit-text-stroke:0.6px #141414">Basics</div>
<div class="t" style="left:1823.35px;top:529.00px;font-size:19px;line-height:19px;font-weight:normal;color:#141414;letter-spacing:0.713px;;-webkit-text-stroke:0.6px #141414">$0.00</div>
<div class="t" style="left:1528.50px;top:581.00px;font-size:18.7px;line-height:18.7px;font-weight:normal;color:#141414;letter-spacing:0.160px;">Virtual machine</div>
<div class="t" style="left:1826.45px;top:581.00px;font-size:18.7px;line-height:18.7px;font-weight:normal;color:#141414;letter-spacing:0.134px;">$0.00</div>
<div class="t" style="left:1528.50px;top:704.00px;font-size:18.6px;line-height:18.6px;font-weight:normal;color:#141414;letter-spacing:0.388px;;-webkit-text-stroke:0.6px #141414">Disks</div>
<div class="t" style="left:1823.35px;top:703.00px;font-size:19px;line-height:19px;font-weight:normal;color:#141414;letter-spacing:0.713px;;-webkit-text-stroke:0.6px #141414">$0.00</div>
<div class="t" style="left:1528.50px;top:762.00px;font-size:18.6px;line-height:18.6px;font-weight:normal;color:#141414;letter-spacing:0.888px;;-webkit-text-stroke:0.6px #141414">Networking</div>
<div class="t" style="left:1823.35px;top:761.00px;font-size:19px;line-height:19px;font-weight:normal;color:#141414;letter-spacing:0.713px;;-webkit-text-stroke:0.6px #141414">$0.00</div>
<div class="t" style="left:1528.50px;top:819.00px;font-size:18.6px;line-height:18.6px;font-weight:normal;color:#141414;letter-spacing:0.674px;;-webkit-text-stroke:0.6px #141414">Management</div>
<div class="t" style="left:1823.35px;top:818.00px;font-size:19px;line-height:19px;font-weight:normal;color:#141414;letter-spacing:0.713px;;-webkit-text-stroke:0.6px #141414">$0.00</div>
<div class="t" style="left:1542.70px;top:898.00px;font-size:18.6px;line-height:18.6px;font-weight:normal;color:#141414;letter-spacing:0.799px;;-webkit-text-stroke:0.6px #141414">Estimated monthly cost</div>
<div class="t" style="left:1832.40px;top:897.00px;font-size:19px;line-height:19px;font-weight:normal;color:#141414;letter-spacing:0.377px;;-webkit-text-stroke:0.6px #141414">$87.60</div>
<div class="t" style="left:1542.70px;top:926.00px;font-size:19px;line-height:19px;font-weight:normal;color:#ad1f26;letter-spacing:0.064px;">One or more costs did not load.</div>
<div class="t" style="left:1542.70px;top:952.00px;font-size:19px;line-height:19px;font-weight:normal;color:#0e4a9e;letter-spacing:0.021px;">View in Pricing Calculator</div>
</body></html>
